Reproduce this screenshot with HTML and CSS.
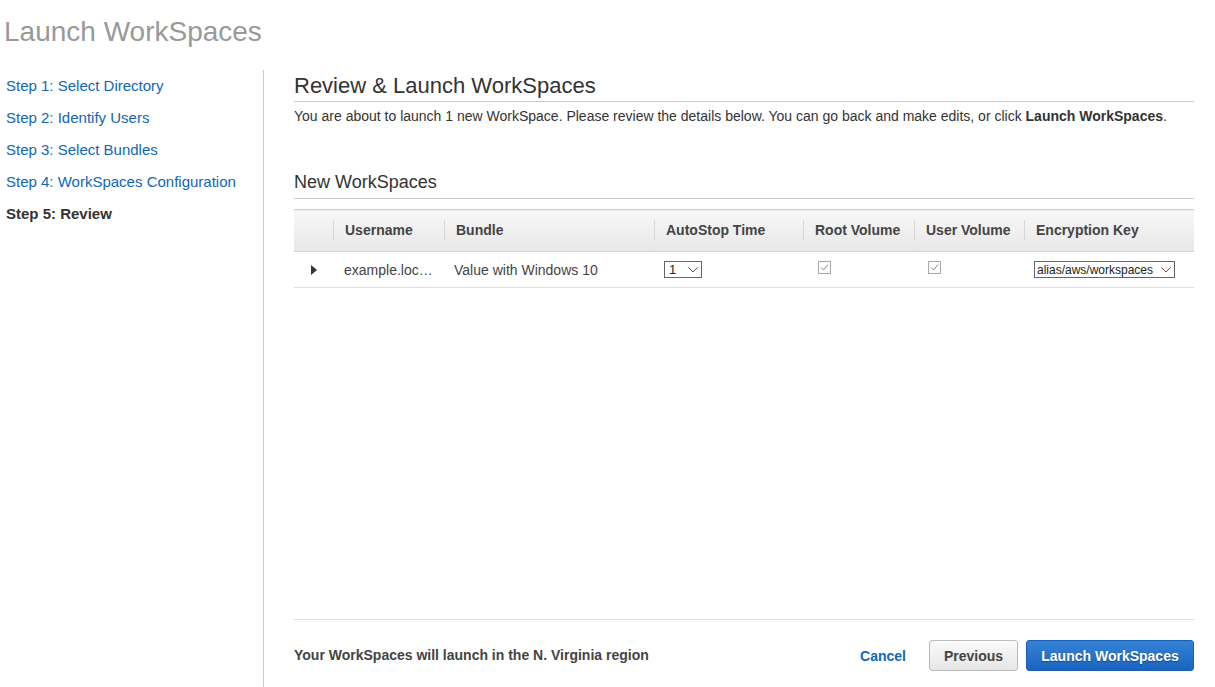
FILE: index.html
```
<!DOCTYPE html>
<html>
<head>
<meta charset="utf-8">
<title>Launch WorkSpaces</title>
<link rel="stylesheet" href="styles.css">
</head>
<body>
<div class="page-title">Launch WorkSpaces</div>
<div class="layout">
  <nav class="steps">
    <a class="step">Step 1: Select Directory</a>
    <a class="step">Step 2: Identify Users</a>
    <a class="step">Step 3: Select Bundles</a>
    <a class="step">Step 4: WorkSpaces Configuration</a>
    <span class="step current">Step 5: Review</span>
  </nav>
  <main class="main">
    <div class="content">
      <h1 class="section-title">Review &amp; Launch WorkSpaces</h1>
      <p class="intro">You are about to launch 1 new WorkSpace. Please review the details below. You can go back and make edits, or click <b>Launch WorkSpaces</b>.</p>
      <h2 class="sub-title">New WorkSpaces</h2>
      <table class="grid">
        <colgroup>
          <col class="w-exp"><col class="w-user"><col class="w-bundle"><col class="w-auto"><col class="w-root"><col class="w-uvol"><col class="w-key">
        </colgroup>
        <thead>
          <tr>
            <th></th>
            <th><div class="th-in">Username</div></th>
            <th><div class="th-in">Bundle</div></th>
            <th><div class="th-in">AutoStop Time</div></th>
            <th><div class="th-in">Root Volume</div></th>
            <th><div class="th-in">User Volume</div></th>
            <th><div class="th-in">Encryption Key</div></th>
          </tr>
        </thead>
        <tbody>
          <tr>
            <td class="expander"><span class="tri"></span></td>
            <td class="c-user">example.loc…</td>
            <td class="c-bundle">Value with Windows 10</td>
            <td class="c-auto"><span class="sel sel-small"><span class="sel-val">1</span><svg class="chev" width="10" height="6" viewBox="0 0 10 6"><path d="M0.5 0.5 L5 5 L9.5 0.5" fill="none" stroke="#555" stroke-width="1"/></svg></span></td>
            <td class="c-root"><span class="cb"><svg width="13" height="13" viewBox="0 0 13 13"><rect x="0.5" y="0.5" width="12" height="12" fill="#fff" stroke="#a8a8a8"/><path d="M3 6.5 L5.5 9 L10 3.5" fill="none" stroke="#8a8a8a" stroke-width="1"/></svg></span></td>
            <td class="c-uvol"><span class="cb"><svg width="13" height="13" viewBox="0 0 13 13"><rect x="0.5" y="0.5" width="12" height="12" fill="#fff" stroke="#a8a8a8"/><path d="M3 6.5 L5.5 9 L10 3.5" fill="none" stroke="#8a8a8a" stroke-width="1"/></svg></span></td>
            <td class="c-key"><span class="sel sel-wide"><span class="sel-val">alias/aws/workspaces</span><svg class="chev" width="10" height="6" viewBox="0 0 10 6"><path d="M0.5 0.5 L5 5 L9.5 0.5" fill="none" stroke="#555" stroke-width="1"/></svg></span></td>
          </tr>
        </tbody>
      </table>
    </div>
    <footer class="footer">
      <div class="region">Your WorkSpaces will launch in the N. Virginia region</div>
      <div class="actions">
        <a class="cancel">Cancel</a>
        <button class="btn btn-secondary">Previous</button>
        <button class="btn btn-primary">Launch WorkSpaces</button>
      </div>
    </footer>
  </main>
</div>
</body>
</html>
```
FILE: styles.css
```
html, body {
  margin: 0;
  padding: 0;
  background: #fff;
  font-family: "Liberation Sans", Arial, sans-serif;
  color: #333;
  height: 100%;
  overflow: hidden;
}
.page-title {
  font-size: 28px;
  line-height: 32px;
  color: #999;
  padding: 16px 0 0 4px;
  height: 54px;
}
.layout {
  display: flex;
  height: calc(100vh - 70px);
}
.steps {
  border-right: 1px solid #ccc;
  display: flex;
  flex-direction: column;
  padding-left: 6px;
  box-sizing: border-box;
  flex: none;
  width: 264px;
}
.step {
  font-size: 15px;
  line-height: 32px;
  color: #1166bb;
  text-decoration: none;
}
.step.current {
  font-weight: bold;
  color: #333;
}
.main {
  flex: 1;
  display: flex;
  flex-direction: column;
  padding: 0 21px 0 30px;
}
.content {
  flex: 1;
}
.section-title {
  font-size: 22px;
  font-weight: normal;
  line-height: 30px;
  margin: 1px 0 0;
  border-bottom: 1px solid #ccc;
  color: #333;
}
.intro {
  font-size: 14px;
  line-height: 20px;
  margin: 4px 0 0;
  color: #333;
}
.sub-title {
  font-size: 18px;
  font-weight: normal;
  line-height: 28px;
  margin: 42px 0 0;
  padding-bottom: 2px;
  border-bottom: 1px solid #ccc;
  color: #333;
}
.grid {
  width: 900px;
  margin-top: 10px;
  border-collapse: collapse;
  table-layout: fixed;
  font-size: 14px;
}
.w-exp { width: 39px; }
.w-user { width: 111px; }
.w-bundle { width: 210px; }
.w-auto { width: 149px; }
.w-root { width: 111px; }
.w-uvol { width: 110px; }
.w-key { width: 170px; }
.grid thead th {
  height: 39px;
  padding: 0 0 2px;
  text-align: left;
  font-weight: bold;
  color: #444;
  background: linear-gradient(#f7f7f7, #e8e8e8);
  border-top: 1px solid #ccc;
  border-bottom: 1px solid #d4d4d4;
}
.th-in {
  border-left: 1px solid #d6d6d6;
  padding-left: 11px;
  line-height: 20px;
  white-space: nowrap;
}
.grid tbody td {
  height: 35px;
  padding: 0;
  border-bottom: 1px solid #ddd;
  color: #444;
  white-space: nowrap;
}
.grid tbody td.expander { padding-left: 17px; }
.tri {
  display: block;
  width: 0;
  height: 0;
  border-left: 6px solid #333;
  border-top: 5px solid transparent;
  border-bottom: 5px solid transparent;
}
.grid tbody td.c-user { padding-left: 11px; }
.grid tbody td.c-bundle { padding-left: 10px; }
.grid tbody td.c-auto { padding-left: 10px; }
.grid tbody td.c-root { padding-left: 15px; }
.grid tbody td.c-uvol { padding-left: 14px; }
.grid tbody td.c-key { padding-left: 10px; }
.sel {
  display: inline-flex;
  align-items: center;
  justify-content: space-between;
  box-sizing: border-box;
  border: 1px solid #666;
  background: #fff;
  vertical-align: middle;
  color: #222;
}
.sel-small {
  width: 38px;
  height: 17px;
  padding: 0 3px 0 4px;
  font-size: 13px;
}
.sel-wide {
  width: 141px;
  height: 17px;
  padding: 0 3px 0 2px;
  font-size: 12px;
}
.chev { display: block; }
.cb {
  display: inline-block;
  vertical-align: middle;
  position: relative;
  top: -3px;
}
.cb svg { display: block; }
.footer {
  border-top: 1px solid #ddd;
  height: 68px;
  display: flex;
  align-items: flex-start;
  justify-content: space-between;
  padding-top: 20px;
  box-sizing: border-box;
  flex: none;
}
.region {
  font-size: 14px;
  font-weight: bold;
  color: #444;
  line-height: 31px;
}
.actions {
  display: flex;
  align-items: center;
}
.cancel {
  font-size: 14px;
  font-weight: bold;
  color: #1166bb;
  margin-right: 23px;
}
.btn {
  font-family: "Liberation Sans", Arial, sans-serif;
  font-size: 14px;
  font-weight: bold;
  height: 31px;
  border-radius: 3px;
  box-sizing: border-box;
  cursor: pointer;
}
.btn-secondary {
  width: 89px;
  color: #444;
  background: linear-gradient(#fafafa, #e6e6e6);
  border: 1px solid #bbb;
  margin-right: 8px;
}
.btn-primary {
  width: 168px;
  color: #fff;
  background: linear-gradient(#3582d8, #1b64be);
  border: 1px solid #1a5fb4;
  text-shadow: 0 1px 1px rgba(0,0,0,0.35);
}
```
